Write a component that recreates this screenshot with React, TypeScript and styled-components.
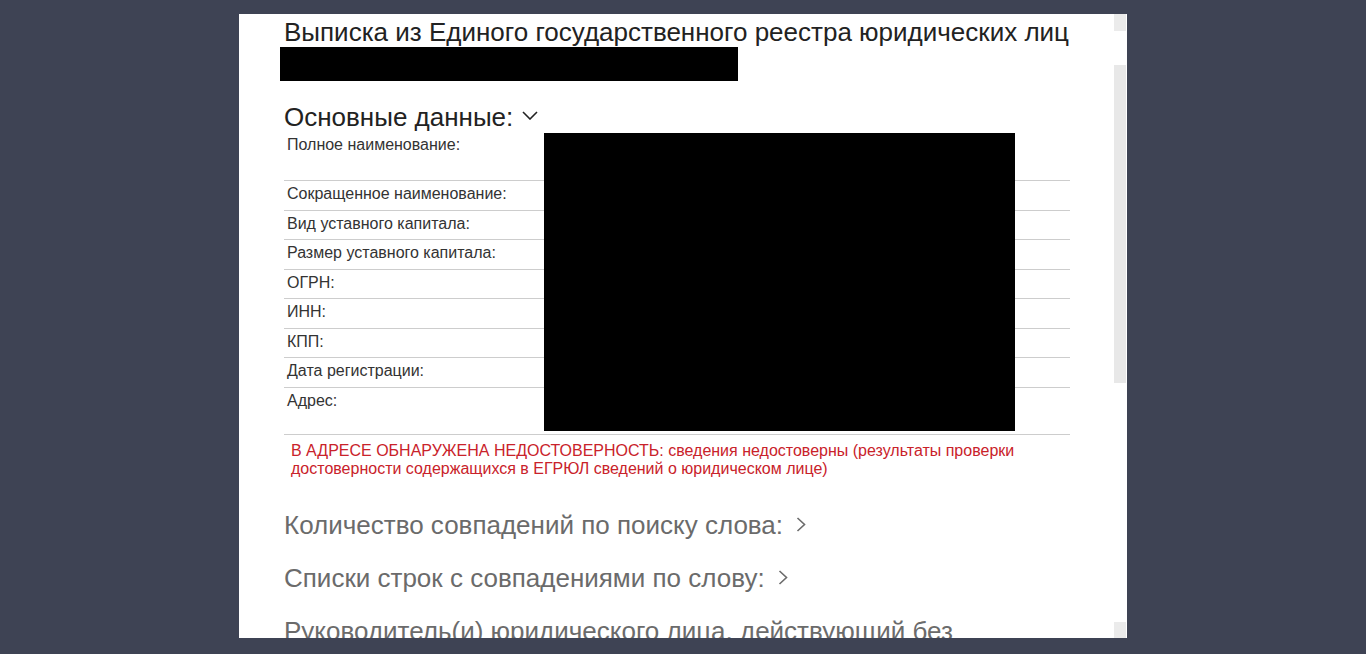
import React from 'react';
import styled, { createGlobalStyle } from 'styled-components';

const GlobalStyle = createGlobalStyle`
	html, body {
		margin: 0;
		padding: 0;
		background: #3e4354;
		font-family: 'Liberation Sans', Arial, sans-serif;
	}
`;

const Page = styled.div`
	display: flex;
	justify-content: center;
	padding-top: 14px;
	height: 100vh;
	box-sizing: border-box;
	overflow: hidden;
`;

const Panel = styled.div`
	display: flex;
	width: 888px;
	height: 624px;
	background: #fff;
	overflow: hidden;
`;

const Content = styled.div`
	flex: 1;
	padding: 3px 44px 0 45px;
	min-width: 0;
`;

const Title = styled.h1`
	margin: 0;
	font-size: 26px;
	font-weight: normal;
	line-height: 30px;
	color: #222;
	white-space: nowrap;
`;

const Redacted = styled.div`
	background: #000;
`;

const TitleRedacted = styled(Redacted)`
	width: 458px;
	height: 34px;
	margin: 0 0 0 -4px;
`;

const SectionHeader = styled.h2<{ $muted?: boolean }>`
	display: flex;
	align-items: center;
	flex-wrap: wrap;
	column-gap: 11px;
	margin: 0;
	font-size: 26px;
	font-weight: normal;
	line-height: 28px;
	color: ${(p) => (p.$muted ? '#6b6b6b' : '#222')};
`;

const MainHeader = styled(SectionHeader)`
	margin-top: 22px;
	column-gap: 9px;
`;

const Collapsed = styled(SectionHeader)`
	margin-top: 25px;
	column-gap: 13px;
`;

const FirstCollapsed = styled(Collapsed)`
	margin-top: 33px;
`;

const Table = styled.div`
	position: relative;
	width: 786px;
	margin-top: 1px;
`;

const Row = styled.div<{ $h?: number }>`
	box-sizing: border-box;
	height: ${(p) => (p.$h ? `${p.$h}px` : '29.5px')};
	border-bottom: 1px solid #cdcdcd;
	padding: 4px 0 0 3px;
	display: grid;
	grid-template-columns: 257px 1fr;
`;

const Label = styled.span`
	font-size: 16px;
	line-height: 18px;
	color: #333;
`;

const ValueCover = styled(Redacted)`
	position: absolute;
	left: 260px;
	top: 1px;
	width: 471px;
	height: 298px;
`;

const Warning = styled.p`
	margin: 0;
	padding: 7px 0 0 7px;
	font-size: 16px;
	line-height: 18px;
	color: #c9222a;
`;

const Scrollbar = styled.div`
	display: flex;
	flex-direction: column;
	width: 12px;
	margin-right: 1px;
`;

const ScrollButton = styled.div<{ $h: number }>`
	height: ${(p) => p.$h}px;
	background: #ebebeb;
`;

const Thumb = styled.div`
	height: 318px;
	margin-top: 34px;
	background: #e8e8e8;
`;

const Spacer = styled.div`
	flex: 1;
`;

const ChevronDown = () => (
	<svg width="16" height="9" viewBox="0 0 16 9" fill="none" style={{ marginTop: '-4px' }}>
		<polyline points="1,1 8,8 15,1" stroke="#222" strokeWidth="1.6" />
	</svg>
);

const ChevronRight = () => (
	<svg width="10" height="15" viewBox="0 0 10 15" fill="none">
		<polyline points="1.5,1 8.5,7.5 1.5,14" stroke="#6b6b6b" strokeWidth="1.6" />
	</svg>
);

const fields: { label: string; h?: number }[] = [
	{ label: 'Полное наименование:', h: 49 },
	{ label: 'Сокращенное наименование:' },
	{ label: 'Вид уставного капитала:' },
	{ label: 'Размер уставного капитала:' },
	{ label: 'ОГРН:' },
	{ label: 'ИНН:' },
	{ label: 'КПП:' },
	{ label: 'Дата регистрации:' },
	{ label: 'Адрес:', h: 47 },
];

function App() {
	return (
		<>
			<GlobalStyle />
			<Page>
				<Panel>
					<Content>
						<Title>Выписка из Единого государственного реестра юридических лиц</Title>
						<TitleRedacted />

						<MainHeader>
							Основные данные: <ChevronDown />
						</MainHeader>
						<Table>
							{fields.map((f) => (
								<Row key={f.label} $h={f.h}>
									<Label>{f.label}</Label>
									<span />
								</Row>
							))}
							<ValueCover />
						</Table>
						<Warning>
							В АДРЕСЕ ОБНАРУЖЕНА НЕДОСТОВЕРНОСТЬ: сведения недостоверны (результаты проверки
							достоверности содержащихся в ЕГРЮЛ сведений о юридическом лице)
						</Warning>

						<FirstCollapsed $muted>
							Количество совпадений по поиску слова: <ChevronRight />
						</FirstCollapsed>
						<Collapsed $muted>
							Списки строк с совпадениями по слову: <ChevronRight />
						</Collapsed>
						<Collapsed $muted>
							Руководитель(и) юридического лица, действующий без доверенности
						</Collapsed>
					</Content>
					<Scrollbar>
						<ScrollButton $h={17} />
						<Thumb />
						<Spacer />
						<ScrollButton $h={16} />
					</Scrollbar>
				</Panel>
			</Page>
		</>
	);
}

export default App;
